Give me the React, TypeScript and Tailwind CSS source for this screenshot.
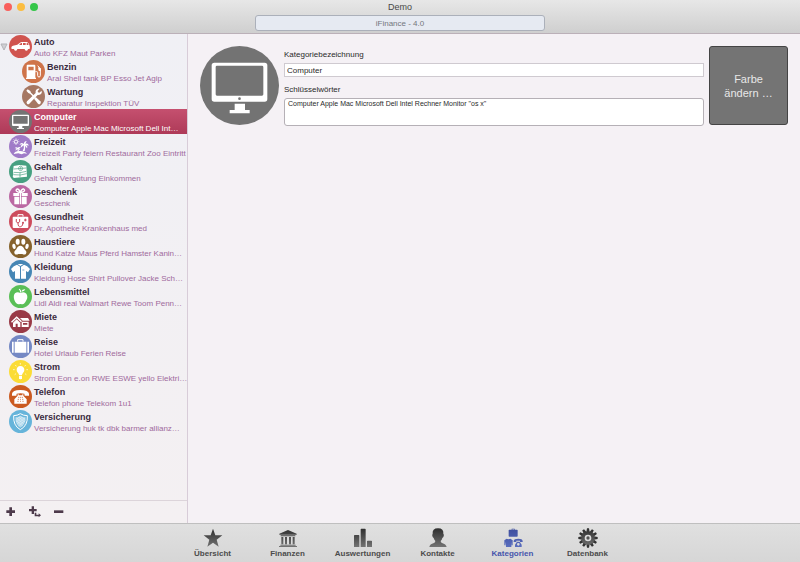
import type { ReactNode } from "react";
import clsx from "clsx";

type Category = {
  name: string;
  keywords: string;
  color: string;
  icon: ReactNode;
  child?: boolean;
  open?: boolean;
};

/* Category glyphs, drawn white on a 69x69 grid */

const monitor = (
  <>
    <path
      fillRule="evenodd"
      d="M12 14h45q3 0 3 3v28q0 3-3 3H12q-3 0-3-3V17q0-3 3-3zm1 4v23h43V18z"
    />
    <path d="M29 48h11v6h5v3H24v-3h5z" />
  </>
);

const car = (
  <path
    fillRule="evenodd"
    d="M8 42q-3-8 4-10l13-3 8-6q2-2 6-2h14q4 0 6 5l3 6q2 10-2 10h-3a5 5 0 0 1-10 0H25a5 5 0 0 1-10 0zm22-12h9v-6h-3zm12 0h8v-6h-8zm11 0h6l-3-6h-3z"
  />
);

const pump = (
  <>
    <path fillRule="evenodd" d="M17 14h20q3 0 3 3v36h2v4H12v-4h2V17q0-3 3-3zm2 6v11h16V20z" />
    <path
      d="M40 35h4q3 0 3 3v9q0 4 4 4t4-4V26l-8-9"
      fill="none"
      stroke="currentColor"
      strokeWidth="3"
    />
    <path d="M48 22l8 3v9l-6-2z" />
  </>
);

const tools = (
  <>
    <path d="M13 17l4-4 8 5 2 5 11 11-3 3-11-11-5-2z" />
    <path d="M36 41l5-5 14 13q3 4 0 7t-7 0z" />
    <path d="M47 11q3-1 6 0l-6 7 1 4 4 1 7-6q2 7-3 11-4 3-9 2L22 56q-4 3-7 0t0-7l26-25q-2-9 6-13z" />
  </>
);

const palm = (
  <>
    <circle cx="21" cy="20" r="5" fill="none" stroke="currentColor" strokeWidth="3" />
    <path
      d="M21 10v3M21 27v3M11 20h3M28 20h3M14 13l2 2M26 25l2 2M28 13l-2 2M14 27l2-2"
      stroke="currentColor"
      strokeWidth="2"
    />
    <path d="M44 27q-7-7-13 2l9-1q-6 4-5 10l9-7q3 10-3 17h6q3-8 1-16l6 8q3-7-4-11l9 3q-1-9-10-6l4-8q-7 0-9 9z" />
    <path d="M26 38q-5-4-9 2h6q-4 3-3 7l5-5q2 4 0 8h4q1-5 0-8l4 4q1-5-3-7h5q-3-5-9-1z" />
    <path d="M14 57q3-9 18-9 16 0 22 8l-9-1-7 3-10-3z" />
  </>
);

const money = (
  <>
    <path d="M14 18l17-3 21 2 2 33-40 4-3-5 2-5-1-10z" />
    <path
      d="M14 27l38-3M33 18q-5 3-4 9 1 5 6 5 6-1 6-7-1-7-8-7zM35 21v8M14 37l19 1 19-4M14 44l20 1 19-4M33 38v14"
      fill="none"
      stroke="#47a081"
      strokeWidth="2"
    />
  </>
);

const gift = (
  <>
    <path d="M13 24h18v9H13zM38 24h18v9H38zM16 35h15v23H16zM38 35h15v23H38z" />
    <path d="M33 24h3v34h-3z" />
    <path
      d="M34 23q-4-12-10-11-5 3-1 7 4 3 11 4 8-1 11-4 4-4-1-7-6-1-10 11z"
      fill="none"
      stroke="currentColor"
      strokeWidth="4"
    />
  </>
);

const medical = (
  <>
    <path d="M27 20v-6h15v6" fill="none" stroke="currentColor" strokeWidth="3" />
    <path d="M14 20h41q3 0 3 3v28q0 3-3 3H14q-3 0-3-3V23q0-3 3-3z" />
    <path
      d="M22 27q-3 11 5 12 7-1 5-12M27 39q0 13 8 11 7-1 7-12M49 26v8M45 30h8"
      fill="none"
      stroke="#c94b5c"
      strokeWidth="3"
    />
    <circle cx="42" cy="38" r="3" fill="#c94b5c" />
  </>
);

const paw = (
  <>
    <ellipse cx="26" cy="20" rx="6" ry="9" />
    <ellipse cx="43" cy="20" rx="6" ry="9" />
    <ellipse cx="15" cy="34" rx="5" ry="8" transform="rotate(-15 15 34)" />
    <ellipse cx="54" cy="34" rx="5" ry="8" transform="rotate(15 54 34)" />
    <path d="M34 32q8 0 12 11 9 7 5 13-4 5-11 1h-12q-7 4-11-1-4-6 5-13 4-11 12-11z" />
  </>
);

const shirt = (
  <>
    <path d="M24 14l9 6v36H18V33l-6 4-6-10q8-10 18-13zM45 14l-9 6v36h15V33l6 4 6-10q-8-10-18-13z" />
    <path d="M26 12h17l-9 6z" />
    <path d="M40 30h6" stroke="#4686b4" strokeWidth="2" />
  </>
);

const apple = (
  <>
    <path d="M34 24q12-6 18 2 6 9 0 20-6 13-13 12-5-2-9 0-8 1-14-13-4-13 2-20 7-6 16-1z" />
    <path d="M34 23q-1-7-5-10l3-2q5 5 5 11z" />
    <path d="M37 19q3-7 12-6-3 8-12 6z" />
  </>
);

const house = (
  <>
    <path d="M6 35l17-16 16 15-3 3-13-12L9 38z" />
    <path fillRule="evenodd" d="M12 38l11-10 11 10v13h-8V41h-6v10h-8z" />
    <path d="M33 24h24l5 8H41z" />
    <path fillRule="evenodd" d="M38 35h21v16H38zm4 4v5h13v-5z" />
  </>
);

const suitcase = (
  <>
    <path d="M26 20v-6h16v6" fill="none" stroke="currentColor" strokeWidth="3" />
    <path d="M9 20h5v33H9zM17 20h35v33H17zM55 20h5v33h-5z" />
  </>
);

const bulb = (
  <>
    <path d="M34 18q12 1 12 12 0 5-4 9-3 3-3 7h-9q0-4-3-7-4-4-4-9 0-11 11-12z" />
    <path d="M30 48h9v7l-3 3h-3l-3-3z" />
    <path
      d="M34 9v5M19 15l3 4M50 15l-3 4M12 29h5M52 29h5M17 44l4-3M52 44l-4-3"
      stroke="currentColor"
      strokeWidth="2"
    />
  </>
);

const phone = (
  <>
    <path d="M9 26q1-10 25-11 25 1 26 11v6H47l-1-6q-12-3-23 0l-1 6H9z" />
    <path d="M26 28h3v3h11v-3h3v4l10 11v13H16V43l10-11z" />
    <path
      d="M27 37h4M33 37h3M38 37h4M26 43h4M33 43h3M39 43h4M25 49h4M33 49h3M40 49h4"
      stroke="#cb5a20"
      strokeWidth="2"
    />
  </>
);

const shield = (
  <>
    <path
      d="M34 11q9 6 21 6 2 30-21 42-22-12-20-42 11 0 20-6z"
      fill="none"
      stroke="currentColor"
      strokeWidth="3"
    />
    <path d="M34 17q6 5 16 5 1 21-16 31-16-10-15-31 9 0 15-5z" opacity="0.5" />
    <path
      d="M22 24l25 20M21 31l22 18M28 21l21 16M35 19l14 11M48 24L23 43M49 31L28 48M41 21L21 36M34 19l-12 9"
      stroke="currentColor"
      strokeWidth="1"
    />
  </>
);

const categories: Category[] = [
  { name: "Auto", keywords: "Auto KFZ Maut Parken", color: "#d0544f", icon: car, open: true },
  { name: "Benzin", keywords: "Aral Shell tank BP Esso Jet Agip", color: "#cf744a", icon: pump, child: true },
  { name: "Wartung", keywords: "Reparatur Inspektion TÜV", color: "#a67863", icon: tools, child: true },
  { name: "Computer", keywords: "Computer Apple Mac Microsoft Dell Int…", color: "#747474", icon: monitor },
  { name: "Freizeit", keywords: "Freizeit Party feiern Restaurant Zoo Eintritt", color: "#a07bc8", icon: palm },
  { name: "Gehalt", keywords: "Gehalt Vergütung Einkommen", color: "#47a081", icon: money },
  { name: "Geschenk", keywords: "Geschenk", color: "#bb68a3", icon: gift },
  { name: "Gesundheit", keywords: "Dr. Apotheke Krankenhaus med", color: "#cd4c5d", icon: medical },
  { name: "Haustiere", keywords: "Hund Katze Maus Pferd Hamster Kanin…", color: "#86622c", icon: paw },
  { name: "Kleidung", keywords: "Kleidung Hose Shirt Pullover Jacke Sch…", color: "#4686b4", icon: shirt },
  { name: "Lebensmittel", keywords: "Lidl Aldi real Walmart Rewe Toom Penn…", color: "#5abf57", icon: apple },
  { name: "Miete", keywords: "Miete", color: "#993a47", icon: house },
  { name: "Reise", keywords: "Hotel Urlaub Ferien Reise", color: "#7488c4", icon: suitcase },
  { name: "Strom", keywords: "Strom Eon e.on RWE ESWE yello Elektri…", color: "#fbdc36", icon: bulb },
  { name: "Telefon", keywords: "Telefon phone Telekom 1u1", color: "#cb5a20", icon: phone },
  { name: "Versicherung", keywords: "Versicherung huk tk dbk barmer allianz…", color: "#66b4da", icon: shield },
];

const gearTeeth = [0, 30, 60, 90, 120, 150, 180, 210, 240, 270, 300, 330];

/* Toolbar glyphs, drawn on a 60x60 grid */
const tabs: { label: string; icon: ReactNode }[] = [
  { label: "Übersicht", icon: <path d="M30 2l7 20h21L41 35l6 21-17-12-17 12 6-21L2 22h21z" /> },
  {
    label: "Finanzen",
    icon: (
      <path d="M30 6l26 11v3H4v-3zM8 22h44v3H8zM10 27h6v22h-6zM21 27h6v22h-6zM33 27h6v22h-6zM44 27h6v22h-6zM7 50h46v3H7zM3 54h54v3H3z" />
    ),
  },
  {
    label: "Auswertungen",
    icon: (
      <path d="M5 21h12q2 0 2 2v34H3V23q0-2 2-2zM25 2h11q2 0 2 2v53H23V4q0-2 2-2zM44 38h11q2 0 2 2v17H42V40q0-2 2-2z" />
    ),
  },
  {
    label: "Kontakte",
    icon: (
      <path d="M30 1q18 0 16 17 3 1 1 7-1 4-4 5-1 6-5 9 0 5 4 6 12 3 14 12H4q1-9 14-12 4-1 4-6-4-4-5-9-3-1-4-6-1-5 1-6-2-17 16-17z" />
    ),
  },
  {
    label: "Kategorien",
    icon: (
      <>
        <path d="M26 5V2h9v3h7q2 0 2 2v17q0 2-2 2H19q-2 0-2-2V7q0-2 2-2zm2 0h5V4h-5z" />
        <path d="M11 32l5 2 6-2 7 5v15h-3V41l-1 16H9L8 41l-1 11H4V37z" />
        <path d="M32 39q1-7 14-7 12 0 13 7v3h-8v-4H40v4h-8z" />
        <path fillRule="evenodd" d="M42 41h8l6 9v7H36v-7zm4 4a4 4 0 1 0 0 8 4 4 0 0 0 0-8z" />
      </>
    ),
  },
  {
    label: "Datenbank",
    icon: (
      <>
        {gearTeeth.map((angle) => (
          <path key={angle} d="M27 1h6l2 12H25z" transform={`rotate(${angle} 30 30)`} />
        ))}
        <path fillRule="evenodd" d="M30 10a20 20 0 1 0 0 40 20 20 0 0 0 0-40zm0 10a10 10 0 1 1 0 20 10 10 0 0 1 0-20z" />
        <circle cx="30" cy="30" r="5" />
      </>
    ),
  },
];

function TitleBar() {
  return (
    <header className="grid h-[34px] shrink-0 grid-cols-[1fr_290px_1fr] border-b border-[#bbb0b8] bg-linear-to-b from-[#e7e7e7] to-[#cfcfcf]">
      <div className="flex items-start gap-[5px] pt-[3px] pl-1">
        <button aria-label="Schließen" className="size-2 rounded-full bg-[#f9605c]" />
        <button aria-label="Minimieren" className="size-2 rounded-full bg-[#fbbd40]" />
        <button aria-label="Vergrößern" className="size-2 rounded-full bg-[#35c649]" />
      </div>
      <div className="flex flex-col items-center">
        <h1 className="h-[15px] text-[9px] leading-[15px] text-[#484848]">Demo</h1>
        <div className="h-4 w-full rounded-[3px] border border-[#abb0ba] bg-[#e6eaf2] text-center text-[8px] leading-[15px] text-[#74777d]">
          iFinance - 4.0
        </div>
      </div>
    </header>
  );
}

function CategoryRow({ category, selected }: { category: Category; selected: boolean }) {
  return (
    <li
      className={clsx(
        "flex h-[25px] items-center",
        selected && "bg-linear-to-b from-[#c5506f] to-[#ae3a58]",
        category.child && "pl-[13px]"
      )}
    >
      <div className="flex w-[9px] shrink-0">
        {category.open && (
          <button aria-label="Einklappen" className="text-[#b3b3b8]">
            <svg viewBox="0 0 8 8" className="size-2">
              <path d="M1 1h6L4 7z" fill="#d0d0d4" stroke="currentColor" />
            </svg>
          </button>
        )}
      </div>
      <button className="flex min-w-0 flex-1 items-center gap-0.5 text-left">
        <svg viewBox="0 0 69 69" className="size-[23px] shrink-0 text-white" fill="currentColor">
          <circle cx="34.5" cy="34.5" r="34.5" fill={category.color} />
          {category.icon}
        </svg>
        <span className="min-w-0 flex-1 pt-0.5 whitespace-nowrap">
          <span
            className={clsx(
              "block text-[9px] leading-[12px] font-bold",
              selected ? "text-white" : "text-[#3a2a3e]"
            )}
          >
            {category.name}
          </span>
          <span
            className={clsx("block text-[8px] leading-[11px]", selected ? "text-white" : "text-[#a06a9c]")}
          >
            {category.keywords}
          </span>
        </span>
      </button>
    </li>
  );
}

function Sidebar() {
  return (
    <aside className="flex w-[188px] shrink-0 flex-col border-r border-[#d8ccd8] bg-linear-to-b from-[#f0f0f5] to-[#f4f0f2]">
      <ul className="flex-1">
        {categories.map((category) => (
          <CategoryRow key={category.name} category={category} selected={category.name === "Computer"} />
        ))}
      </ul>
      <div className="flex h-[23px] items-center gap-[13px] border-t border-[#dcd4da] pl-[6px] text-[#4d3a4b]">
        <button aria-label="Hinzufügen">
          <svg viewBox="0 0 30 30" className="size-[10px]" fill="currentColor">
            <path d="M10 1h8v9h9v8h-9v9h-8v-9H1v-8h9z" />
          </svg>
        </button>
        <button aria-label="Unterkategorie hinzufügen">
          <svg viewBox="0 0 36 36" className="size-3" fill="currentColor">
            <path d="M8 1h7v8h8v7h-8v8H8v-8H0V9h8zM17 20h5v6h7v-4l7 6-7 6v-3H17z" />
          </svg>
        </button>
        <button aria-label="Entfernen">
          <svg viewBox="0 0 30 30" className="size-[10px]" fill="currentColor">
            <path d="M0 10h28v8H0z" />
          </svg>
        </button>
      </div>
    </aside>
  );
}

function CategoryEditor() {
  return (
    <main className="grid flex-1 grid-cols-[79px_1fr_79px] items-start gap-[5px] bg-[#f5f1f5] p-3">
      <svg viewBox="0 0 237 237" className="size-[79px]" fill="#fff">
        <circle cx="118.5" cy="118.5" r="118.5" fill="#737373" />
        <path
          fillRule="evenodd"
          d="M43 50h151q8 0 8 8v101q0 8-8 8H43q-8 0-8-8V58q0-8 8-8zm8 9q-4 0-4 4v82q0 4 4 4h135q4 0 4-4V63q0-4-4-4z"
        />
        <circle cx="118.5" cy="158" r="4" fill="#737373" />
        <path d="M104 173h31v19h14v10H89v-10h15z" />
      </svg>
      <form className="flex min-w-0 flex-col text-[8px] text-[#2a2a2a]">
        <label htmlFor="name" className="h-[17px] leading-[17px]">
          Kategoriebezeichnung
        </label>
        <input
          id="name"
          defaultValue="Computer"
          className="h-[14px] w-full border border-[#cfcad0] bg-white px-[2px] outline-none"
        />
        <label htmlFor="keywords" className="mt-1 h-[17px] leading-[17px]">
          Schlüsselwörter
        </label>
        <textarea
          id="keywords"
          defaultValue={'Computer Apple Mac Microsoft Dell Intel Rechner Monitor "os x"'}
          className="block h-7 w-full resize-none overflow-hidden rounded-[3px] border border-[#b5b0b6] bg-white px-[3px] text-[7px] leading-[9px] outline-none"
        />
      </form>
      <button className="h-[79px] rounded-[3px] border border-[#444] bg-[#747474] text-[11px] leading-[14px] text-[#e8e8e8]">
        Farbe
        <br />
        ändern …
      </button>
    </main>
  );
}

function TabBar() {
  return (
    <nav className="flex h-[39px] shrink-0 justify-center border-t border-[#bfbfbf] bg-linear-to-b from-[#e0e0e0] to-[#d6d6d6]">
      <svg className="absolute size-0" aria-hidden="true">
        <linearGradient id="dark" x1="0" y1="0" x2="0" y2="60" gradientUnits="userSpaceOnUse">
          <stop offset="0" stopColor="#2c2c2c" />
          <stop offset="1" stopColor="#777" />
        </linearGradient>
        <linearGradient id="blue" x1="0" y1="0" x2="0" y2="60" gradientUnits="userSpaceOnUse">
          <stop offset="0" stopColor="#3c4c9c" />
          <stop offset="1" stopColor="#5b6fc0" />
        </linearGradient>
      </svg>
      {tabs.map(({ label, icon }) => {
        const active = label === "Kategorien";
        return (
          <button
            key={label}
            className={clsx(
              "flex w-[75px] flex-col items-center pt-1 text-[8px] leading-[12px] font-bold",
              active ? "text-[#4655ac]" : "text-[#4c4c4c]"
            )}
          >
            <svg viewBox="0 0 60 60" className="size-5" fill={active ? "url(#blue)" : "url(#dark)"}>
              {icon}
            </svg>
            {label}
          </button>
        );
      })}
    </nav>
  );
}

export default function App() {
  return (
    <div className="flex min-h-screen flex-col font-['Liberation_Sans',Arial,sans-serif]">
      <TitleBar />
      <div className="flex flex-1">
        <Sidebar />
        <CategoryEditor />
      </div>
      <TabBar />
    </div>
  );
}
